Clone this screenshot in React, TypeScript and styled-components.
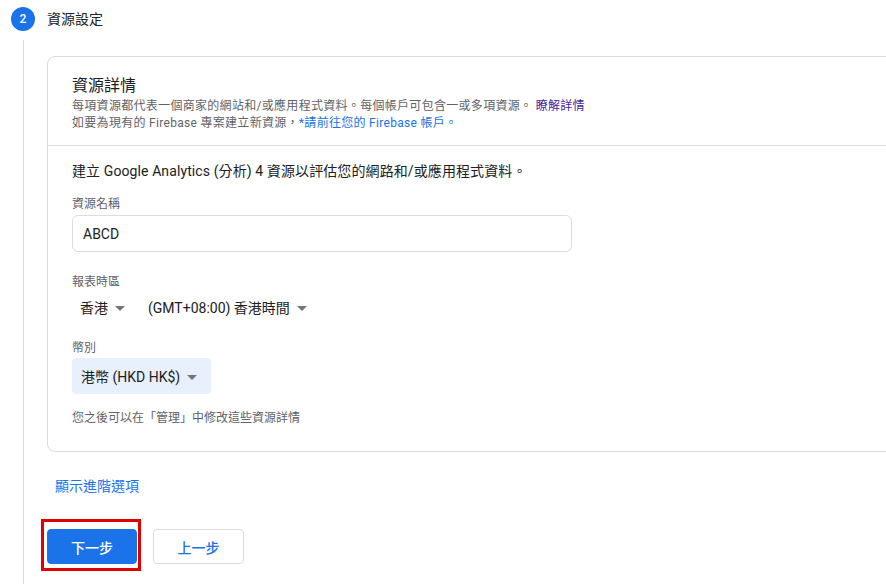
import styled, { createGlobalStyle } from 'styled-components';

const GlobalStyle = createGlobalStyle`
  html, body {
    margin: 0;
    padding: 0;
    background: #ffffff;
    overflow: hidden;
  }
  body {
    font-family: Roboto, "Noto Sans CJK TC", "Noto Sans", sans-serif;
    color: #202124;
  }
`;

const Page = styled.div`
  width: 886px;
  height: 584px;
  overflow: hidden;
`;

const StepHeader = styled.div`
  display: flex;
  align-items: center;
  gap: 12px;
  padding: 7px 11px 0;
`;

const StepNumber = styled.div`
  width: 24px;
  height: 24px;
  border-radius: 50%;
  background: #1a73e8;
  color: #ffffff;
  font-size: 12px;
  font-weight: 500;
  display: flex;
  align-items: center;
  justify-content: center;
`;

const StepTitle = styled.div`
  font-size: 14px;
  line-height: 20px;
  color: #202124;
`;

const StepBody = styled.div`
  margin: 9px 0 0 23px;
  border-left: 1px solid #dadce0;
  padding: 16px 0 40px 23px;
`;

const Card = styled.div`
  border: 1px solid #dadce0;
  border-radius: 8px;
  margin-right: -24px;
`;

const CardHeader = styled.div`
  padding: 17px 24px 13px;
  border-bottom: 1px solid #dadce0;
`;

const CardTitle = styled.div`
  font-size: 16px;
  line-height: 24px;
  color: #202124;
`;

const Description = styled.div`
  font-size: 12px;
  line-height: 17px;
  letter-spacing: 0.3px;
  color: #5f6368;
`;

const Link = styled.a<{ $visited?: boolean }>`
  color: ${(p) => (p.$visited ? '#4527a0' : '#1a73e8')};
  text-decoration: none;
  cursor: pointer;
`;

const CardBody = styled.div`
  padding: 15px 24px 25px;
  display: flex;
  flex-direction: column;
  align-items: flex-start;
`;

const Intro = styled.div`
  font-size: 14px;
  line-height: 20px;
  letter-spacing: 0.1px;
  color: #202124;
  margin-bottom: 15px;
`;

const FieldLabel = styled.div<{ $gap?: number }>`
  font-size: 12px;
  line-height: 16px;
  color: #5f6368;
  margin-bottom: ${(p) => p.$gap ?? 4}px;
`;

const TextInput = styled.div`
  box-sizing: border-box;
  width: 500px;
  height: 37px;
  border: 1px solid #dadce0;
  border-radius: 6px;
  padding: 0 10px;
  display: flex;
  align-items: center;
  font-size: 14px;
  color: #202124;
  margin-bottom: 22px;
`;

const SelectRow = styled.div`
  display: flex;
  gap: 7px;
  margin: -1px 0 15px;
`;

const Select = styled.div<{ $filled?: boolean }>`
  box-sizing: border-box;
  height: 36px;
  display: flex;
  align-items: center;
  gap: 7px;
  padding: ${(p) => (p.$filled ? '0 14px 0 9px' : '0 8px')};
  border-radius: 4px;
  background: ${(p) => (p.$filled ? '#e8f0fe' : 'transparent')};
  font-size: 14px;
  color: #202124;
`;

const Arrow = styled.span`
  width: 0;
  height: 0;
  border-left: 5px solid transparent;
  border-right: 5px solid transparent;
  border-top: 5px solid #757575;
  margin-top: 2px;
`;

const Note = styled.div`
  font-size: 12px;
  line-height: 16px;
  color: #5f6368;
  margin-top: 16px;
`;

const AdvancedLink = styled(Link)`
  display: block;
  font-size: 14px;
  line-height: 20px;
  margin: 24px 0 0 8px;
`;

const Actions = styled.div`
  display: flex;
  align-items: flex-start;
  gap: 12px;
  margin: 23px 0 0 -6px;
`;

const Highlight = styled.div`
  border: 3px solid #e00000;
  padding: 7px 1px 4px 3px;
  display: flex;
`;

const Button = styled.button<{ $primary?: boolean }>`
  box-sizing: border-box;
  height: 35px;
  border-radius: 4px;
  font-family: inherit;
  font-size: 14px;
  font-weight: 500;
  cursor: pointer;
  border: 1px solid ${(p) => (p.$primary ? '#1a73e8' : '#dadce0')};
  background: ${(p) => (p.$primary ? '#1a73e8' : '#ffffff')};
  color: ${(p) => (p.$primary ? '#ffffff' : '#1a73e8')};
  margin-top: ${(p) => (p.$primary ? 0 : 10)}px;
  width: ${(p) => (p.$primary ? 90 : 91)}px;
`;

export default function App() {
  return (
    <Page>
      <GlobalStyle />
      <StepHeader>
        <StepNumber>2</StepNumber>
        <StepTitle>資源設定</StepTitle>
      </StepHeader>
      <StepBody>
        <Card>
          <CardHeader>
            <CardTitle>資源詳情</CardTitle>
            <Description>
              每項資源都代表一個商家的網站和/或應用程式資料。每個帳戶可包含一或多項資源。{' '}
              <Link $visited>瞭解詳情</Link>
            </Description>
            <Description>
              如要為現有的 Firebase 專案建立新資源，<Link>*請前往您的 Firebase 帳戶。</Link>
            </Description>
          </CardHeader>
          <CardBody>
            <Intro>建立 Google Analytics (分析) 4 資源以評估您的網路和/或應用程式資料。</Intro>
            <FieldLabel $gap={3}>資源名稱</FieldLabel>
            <TextInput>ABCD</TextInput>
            <FieldLabel $gap={0}>報表時區</FieldLabel>
            <SelectRow>
              <Select>
                香港 <Arrow />
              </Select>
              <Select>
                (GMT+08:00) 香港時間 <Arrow />
              </Select>
            </SelectRow>
            <FieldLabel $gap={2}>幣別</FieldLabel>
            <Select $filled>
              港幣 (HKD HK$) <Arrow />
            </Select>
            <Note>您之後可以在「管理」中修改這些資源詳情</Note>
          </CardBody>
        </Card>
        <AdvancedLink>顯示進階選項</AdvancedLink>
        <Actions>
          <Highlight>
            <Button $primary>下一步</Button>
          </Highlight>
          <Button>上一步</Button>
        </Actions>
      </StepBody>
    </Page>
  );
}
